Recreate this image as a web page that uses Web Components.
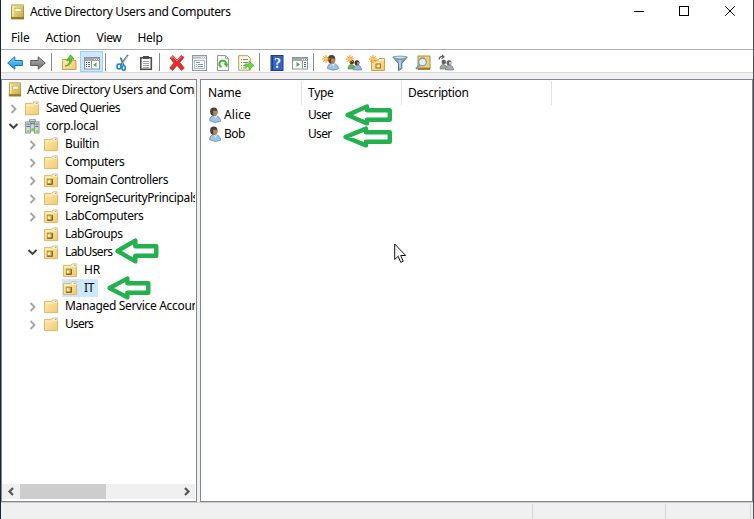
<!DOCTYPE html>
<html lang="en"><head><meta charset="utf-8"><title>Active Directory Users and Computers</title>
<style>html,body{margin:0;height:519px;overflow:hidden;background:#fff}</style></head>
<body><aduc-window></aduc-window>
<script>
const defs = `<svg width="0" height="0" style="position:absolute"><defs>
<linearGradient id="y" x1="0" y1="0" x2="1" y2="1"><stop stop-color="#ffeab0"/><stop offset="1" stop-color="#efca72"/></linearGradient>
<linearGradient id="k" x1="0" y1="0" x2="1" y2="1"><stop stop-color="#f3e6a4"/><stop offset="1" stop-color="#c9a73e"/></linearGradient>
<linearGradient id="b" x1="0" y1="0" x2="0" y2="1"><stop stop-color="#86d8ff"/><stop offset="1" stop-color="#168ee0"/></linearGradient>
<linearGradient id="g" x1="0" y1="0" x2="0" y2="1"><stop stop-color="#b5b5b5"/><stop offset="1" stop-color="#6c6c6c"/></linearGradient></defs></svg>`;
const folder = '<path d="M.5 2.500h7.500l1.500-1.500h5v13.500H.5z" fill="url(#y)" stroke="#d9b565"/><path d="M9.500 2.500h5" stroke="#fff" stroke-width="1.800"/><path d="M11.500 2.500h2" stroke="#3b91df"/><path d="M1.500 4.500h7.500l1-1h4" stroke="#fff2c8" fill="none"/>';
const head = (x,y) => `<g transform="translate(${x} ${y})"><path d="M2.500 13.500C2.500 10 4 8.500 7.500 8C11 8.500 13.500 11 13.300 14Q8 16.500 2.500 13.500z" fill="#9cc5ea" stroke="#6289b1" stroke-width=".8"/><path d="M6.500 8l2 3.500L10 8z" fill="#e9f4ff"/><ellipse cx="6.600" cy="4.300" rx="3.700" ry="4.200" fill="#49403b"/><path d="M5.800 3.500h4.400v3L8.500 9.200 6.200 8z" fill="#bd8156"/></g>`;
const spark = '<path d="M4 0v8M0 4h8M1.300 1.300l5.400 5.400M6.700 1.300L1.300 6.700" stroke="#f79b20" stroke-width="1.100"/><circle cx="4" cy="4" r="1.500" fill="#ffcf55"/>';
const panel = '<rect x=".5" y="2.500" width="15" height="11.500" fill="#fff" stroke="#8b929b"/><path d="M1 4.500h14" stroke="#a1a8b2" stroke-width="3"/><path d="M10 4.500h1m1 0h1m1 0h1" stroke="#fff"/>';
const arrowR = 'M.7 5.500h7.500V1.800L15.300 8l-7.100 6.200v-3.700H.7z';
const people = (a,b,c) => `<circle cx="5.800" cy="7" r="2.300" fill="${c}"/><path d="M2 14q0-5 4-4.500 3 .5 3 4.500z" fill="${a}" stroke="#5c785c" stroke-width=".6"/><circle cx="11" cy="7.700" r="2.500" fill="${c}"/><path d="M11 7h2v2l-1 1-1-1z" fill="#ba825b"/><path d="M7.500 15q0-5 4-4.700 4 .2 4 4.700z" fill="${b}" stroke="#5c6f85" stroke-width=".6"/>`;
const icons = {
 folder,
 ou: folder+'<rect x="3.500" y="6.500" width="5" height="5.500" fill="#d8bc5c" stroke="#a58a3a"/><rect x="4" y="8" width="2.500" height="2.500" fill="#fff4bd"/><path d="M3.500 12h5.500V6.500" stroke="#6f5c1c" fill="none"/>',
 book:'<rect x="2.500" y="1" width="12" height="14" fill="url(#k)" stroke="#ae9440"/><path d="M2 1.500h13" stroke="#d8c377"/><path d="M4 2v10.500" stroke="#fff6c4"/><rect x="6" y="4.500" width="6" height="3" fill="#fffde5" stroke="#c9b25d" stroke-width=".7"/><path d="M2 14h13" stroke="#957a28" stroke-width="2"/>',
 domain:'<g stroke="#76848b" stroke-width=".8" fill="#d0dadd"><rect x="5" y=".7" width="6" height="12"/><rect x=".7" y="3" width="5" height="12"/><rect x="10" y="3" width="5" height="12"/></g><path d="M6 3h4M6 5h4M1.500 5.500h3.500M1.500 8h3.500M11 5.500h3M11 8h3" stroke="#506269"/><path d="M2.500 13h2M7 11h2.500M12 13h2" stroke="#6dda18" stroke-width="2.200"/>',
 back:`<path transform="matrix(-1 0 0 1 16 0)" d="${arrowR}" fill="url(#b)" stroke="#2070a9"/>`,
 fwd:`<path d="${arrowR}" fill="url(#g)" stroke="#5b5b5b"/>`,
 up:'<path d="M1.500 4.500h4l1.500 1h8v9h-13.500z" fill="url(#y)" stroke="#c7a257"/><path d="M4 11c4-1 5-4 4.500-6.500L5.500 5.500 9.500 0l3.500 4-2.500.1C11 7 9 11 4 11z" fill="#57d628" stroke="#329417" stroke-width=".7"/>',
 tree:panel+'<path d="M7.500 6v7.500" stroke="#8b929b"/><path d="M2 7.500h1m1 0h2M2 9.500h1m1 0h2M2 11.500h1m1 0h2" stroke="#3d6d9b"/><path d="M12.500 7.200v5l-3-2.500z" fill="#39b62c"/>',
 cut:'<path d="M13 0L5.500 10M5.500 2.500L9 11" stroke="#567185" stroke-width="1.800"/><path d="M12.500 1L7 9" stroke="#bcd4e2" stroke-width=".8"/><ellipse cx="4" cy="11.500" rx="2" ry="2.500" fill="none" stroke="#1784d6" stroke-width="1.600"/><ellipse cx="8.600" cy="13" rx="1.700" ry="2.200" fill="none" stroke="#1784d6" stroke-width="1.600"/>',
 clip:'<rect x="2.800" y="2.800" width="10.500" height="11.500" fill="#fff" stroke="#4d4d4d" stroke-width="1.600"/><path d="M5 1h6v3H5z" fill="#4d4d4d"/><path d="M5 6.500h6M5 8.500h6M5 10.500h6M5 12.500h6" stroke="#8e8e8e" stroke-width=".8"/>',
 del:'<path d="M1 3l3-2.500 4 4.500 4-4.500L15 2.300 10.800 7.500 15.300 13l-2.800 2.500L8 10.500 3.500 15.500.7 13l4.300-5z" fill="#e52c2d" stroke="#ad171b" stroke-width=".6"/><path d="M2 3l2-1.500 4 4.500 4-4.500" fill="none" stroke="#ff8c84"/>',
 props:'<rect x=".5" y=".5" width="14" height="15" fill="#f3f6fa" stroke="#9199a2"/><path d="M1 2.500h13" stroke="#b5bcc5" stroke-width="2"/><path d="M9 2.500h1m1 0h1m1 0h1" stroke="#fff"/><rect x="2.500" y="5.500" width="10" height="8" fill="#fff" stroke="#9ca9b7" stroke-width=".8"/><path d="M4 7.500h4M4 9.500h1m1 0h5M4 11.500h1m1 0h5" stroke="#6d9bc4"/>',
 refresh:'<path d="M2.500.5h8l3 3v12h-11z" fill="#f8f8f5" stroke="#999"/><path d="M10.500.5v3h3" fill="none" stroke="#aaa"/><path d="M6.500 12A3.300 3.300 0 1 1 11 9" fill="none" stroke="#3bb735" stroke-width="1.900"/><path d="M8.500 8.500H13L12 12.500z" fill="#3bb735"/>',
 exp:'<path d="M.7.700h9l2.500 2.500v12H.7z" fill="#fffbea" stroke="#b69b67"/><path d="M3 4.500h1m1 0h5M3 7.500h1m1 0h5M3 10.500h1m1 0h5M3 13h1m1 0h4" stroke="#6d6b6b" stroke-width=".8"/><path d="M7 9h4V6l5 4.500-5 4v-2.700H7z" fill="#69dc41" stroke="#379b25" stroke-width=".6"/>',
 help:'<rect x="2" y=".5" width="12" height="15" fill="#3763cc" stroke="#203b91"/><path d="M3.500 1v14" stroke="#253f98"/><text x="5" y="12.500" fill="#fff" font-family="Liberation Serif,serif" font-weight="bold" font-size="14">?</text>',
 console:panel+'<path d="M10.500 6v7.500" stroke="#8b929b"/><path d="M12 7.500h2M12 9.500h2M12 11.500h2" stroke="#3d6d9b"/><path d="M4.500 7v5l3.500-2.500z" fill="#39b62c"/>',
 user:head(2,0)+'<g transform="translate(-1 0)">'+spark+'</g>',
 group:people('#64b94e','#8dbbe4','#4c362b')+spark,
 newou:'<path d="M2.500 5.500h6l1.500-2h5.500v12h-13z" fill="url(#y)" stroke="#cea14c"/><path d="M10 5h5" stroke="#fff"/><rect x="7" y="9" width="4.500" height="4" fill="#fae38e" stroke="#9b731c"/>'+spark,
 filter:'<path d="M.8 2h14.500L9.800 8.500v5L6.500 15.500v-7z" fill="#83a6bc" stroke="#55758b"/><ellipse cx="8" cy="2.500" rx="6.500" ry="1.400" fill="#cce1ed" stroke="#65859a" stroke-width=".7"/><path d="M8 5v8" stroke="#c5deed" stroke-width="1.400"/>',
 find:'<rect x="3" y="1" width="12" height="13" fill="#ead07a" stroke="#b78e31"/><path d="M3 13.700h12" stroke="#967329" stroke-width="2"/><circle cx="7.500" cy="7" r="3.800" fill="#e3f3fc" stroke="#7894a5" stroke-width="1.200"/><path d="M4.500 10L1 14" stroke="#7b9cb4" stroke-width="2"/>',
 addgroup:people('#a4a4a4','#aaa','#666').replace('#ba825b','#ccc')+'<path d="M1 4.500Q2 .5 5 1.500M4 0l2 2-2.500 1.500" fill="none" stroke="#555" stroke-width="1.100"/>',
 head:head(-.8,-.7)
};
const textFont = 'font:12px/18px "Noto Sans","Open Sans",sans-serif;color:#000;';
function define(name, css, html, ready){
 customElements.define(name, class extends HTMLElement{
  connectedCallback(){ if(this.shadowRoot) return;
   const s=this.attachShadow({mode:'open'}), t=document.createElement('template');
   t.innerHTML=`<style>${css}</style>${typeof html==='function'?html(this):html}`;
   s.append(t.content.cloneNode(true)); if(ready) ready(this,s);
  }});
}
define('ui-icon',':host{display:block;flex:none;width:16px;height:16px}svg{display:block;overflow:visible}',
 e=>defs+`<svg width="${e.getAttribute('size')||16}" height="${e.getAttribute('size')||16}" viewBox="0 0 16 16" fill="none">${icons[e.getAttribute('name')]}</svg>`);
define('ui-label',':host{display:block;flex:none;white-space:nowrap;'+textFont+'}span{display:inline-block}','<span><slot></slot></span>',(e,s)=>{
 const w=+e.getAttribute('w'), sp=s.querySelector('span'), n=e.textContent.length;
 if(w&&n>1) sp.style.letterSpacing=((w-sp.getBoundingClientRect().width)/n)+'px';
});
define('title-bar',':host{display:flex;height:25px;align-items:center;padding-left:8px}ui-icon{margin-top:-2px}ui-label{margin:-1px auto 0 5px}svg{display:block;flex:none}',
 `<ui-icon name="book"></ui-icon><ui-label w="200.5">Active Directory Users and Computers</ui-label>
 <svg width="119" height="25" fill="none" stroke="#000"><path d="M0 11.500h10"/><rect x="45.500" y="6.500" width="9" height="9"/><path d="M91.200 6.200l9.600 9.600m0-9.600l-9.600 9.600"/></svg>`);
define('menu-bar',':host{display:flex;height:24px;padding:4px 0 0 10px;box-sizing:border-box;gap:16px}',
 '<ui-label w="18.500">File</ui-label><ui-label w="35">Action</ui-label><ui-label w="25">View</ui-label><ui-label w="25">Help</ui-label>');
define('tool-button',':host{display:flex;width:23px;height:21px;box-sizing:border-box;padding-top:2px;align-items:center;justify-content:center}:host([on]){background:#cce8ff;box-shadow:inset 0 0 0 1px #99d1ff}',
 e=>`<ui-icon name="${e.getAttribute('icon')}"></ui-icon>`);
define('tool-sep',':host{display:block;width:8px;height:18px;box-sizing:border-box;padding-left:2px}i{display:block;width:1px;height:18px;background:#8a8a8a}','<i></i>');
define('tool-bar',':host{display:flex;height:24px;box-sizing:border-box;padding:1px 2px 0;border-top:1px solid #aeadb5;border-bottom:1px solid #d7d7d7;align-items:center;background:#fff}',
 ['back','fwd','|','up','tree','|','cut','clip','|','del','props','refresh','exp','|','help','console','|','user','group','newou','filter','find','addgroup'].map(n=>n==='|'?'<tool-sep></tool-sep>':`<tool-button icon="${n}" ${n==='tree'?'on':''}></tool-button>`).join(''));
define('tree-row',':host{display:flex;height:18px;align-items:center}.c{width:20px;height:16px;flex:none}.i{padding:0 6px 0 1px;height:18px;display:flex;align-items:center}.n{display:flex;align-items:center;height:18px;padding-right:4px}:host([sel]) .n{background:#cce8ff}ui-label{margin-top:-1px}.i ui-icon{width:15px;height:15px}',
 e=>{const d=+e.getAttribute('depth'),x=e.getAttribute('state');
 return `<svg class="c" style="margin-left:${d*19}px" fill="none" stroke="${x==='open'?'#404040':'#a6a6a6'}" stroke-width="1.900"><path d="${x==='open'?'M5.500 6l4 4 4-4':x==='closed'?'M7.500 5l4 4-4 4':''}"/></svg><div class="n"><div class="i"><ui-icon size="15" name="${e.getAttribute('icon')}"></ui-icon></div><ui-label w="${e.getAttribute('w')}">${e.textContent}</ui-label></div>`});
define('scroll-bar',':host{display:flex;height:15px;background:#f0f0f0;margin:0 1px 0 0}svg{flex:none}.thumb{width:86px;background:#cdcdcd}.space{flex:1}',
 '<svg width="18" height="15" fill="none" stroke="#555" stroke-width="2.200"><path d="M11 4L7.500 7.500 11 11"/></svg><div class="thumb"></div><div class="space"></div><svg width="17" height="15" fill="none" stroke="#555" stroke-width="2.200"><path d="M7 4l3.500 3.500L7 11"/></svg>');
const rows=[['Saved Queries',0,'closed','folder',74],['corp.local',0,'open','domain',52],['Builtin',1,'closed','folder',34],['Computers',1,'closed','folder',59.5],['Domain Controllers',1,'closed','ou',103],['ForeignSecurityPrincipals',1,'closed','folder',133],['LabComputers',1,'closed','ou',78.500],['LabGroups',1,'','ou',57.5],['LabUsers',1,'open','ou',47.5],['HR',2,'','ou',16],['IT',2,'','ou',10],['Managed Service Accounts',1,'closed','folder',143],['Users',1,'closed','folder',28]];
define('tree-panel',':host{display:flex;flex-direction:column;width:196px;height:423px;box-sizing:border-box;border:1px solid #828790;background:#fff;padding:1px 0}.v{flex:1;overflow:hidden;margin:0 1px 0 2px}.r{display:flex;height:18px;padding-left:3px;align-items:center;gap:4px}.r ui-label{margin-top:-1px}scroll-bar{margin-bottom:1px}',
 '<div class="v"><div class="r"><ui-icon size="15" name="book"></ui-icon><ui-label w="201.500">Active Directory Users and Computers</ui-label></div>'+rows.map(r=>`<tree-row depth="${r[1]}" state="${r[2]}" icon="${r[3]}" w="${r[4]}" ${r[0]==='IT'?'sel':''}>${r[0]}</tree-row>`).join('')+'</div><scroll-bar></scroll-bar>');
define('list-panel',':host{display:block;flex:1;height:423px;box-sizing:border-box;border:1px solid #828790;background:#fff}.h{display:flex;height:24px;margin:1px 0 1px}.h div{box-sizing:border-box;padding:3px 0 0 6px;border-right:1px solid #e2e2e2;width:100px}.h div:first-child{width:101px;padding-left:7px}.h div:last-child{width:150px}.r{display:flex;height:19px;align-items:center;padding-left:7px}.a{width:100px;display:flex;align-items:center}ui-label{margin-top:-1px}.h ui-label{margin:0}',
 '<div class="h"><div><ui-label w="33">Name</ui-label></div><div><ui-label w="25.500">Type</ui-label></div><div><ui-label w="60.500">Description</ui-label></div></div>'+[['Alice',27],['Bob',21]].map(r=>`<div class="r"><div class="a"><ui-icon name="head"></ui-icon><ui-label w="${r[1]}">${r[0]}</ui-label></div><ui-label w="23.500">User</ui-label></div>`).join(''));
define('status-bar',':host{display:flex;flex:1;border-top:1px solid #cbcbd0;padding-top:1px;background:#f0f0f0}div{box-sizing:border-box;border-right:1px solid #d5d5d5}.a{width:532px}.b{width:133px}.c{width:85px}','<div class="a"></div><div class="b"></div><div class="c"></div>');
define('green-arrow',':host{display:block;position:absolute}svg{display:block;overflow:visible}',
 e=>{const w=+e.getAttribute('w'),h=+e.getAttribute('h'),m=h/2,n=w*.48;return `<svg width="${w}" height="${h}"><path d="M3.500 ${m}L${n} 2.600V${m-4.800}H${w-2.200}V${m+4.800}H${n}V${h-2.600}z" fill="#fff" stroke="#22b14c" stroke-width="4.400" stroke-linejoin="round"/></svg>`});
define('mouse-pointer',':host{display:block;position:absolute;left:393px;top:243px}','<svg width="14" height="21" style="display:block"><path d="M.700 1v15.500l3.500-3.200 2.500 6 2.500-1-2.500-5.800h5z" fill="#fff" stroke="#111"/></svg>');
define('aduc-window',':host{display:flex;flex-direction:column;position:relative;width:754px;height:519px;box-sizing:border-box;border-left:1px solid #1c2433;border-right:1px solid #4a4d55;background:#fff;overflow:hidden}.p{display:flex;gap:3px;height:423px;padding-top:6px;background:#f0f0f0}',
 '<title-bar></title-bar><menu-bar></menu-bar><tool-bar></tool-bar><div class="p"><tree-panel></tree-panel><list-panel></list-panel></div><status-bar></status-bar>'+[[343.500,103.500,48,22],[341.500,125.500,50,22],[113.500,238,44.500,26],[106,275.500,44.500,24]].map(a=>`<green-arrow w="${a[2]}" h="${a[3]}" style="left:${a[0]-1}px;top:${a[1]}px"></green-arrow>`).join('')+'<mouse-pointer></mouse-pointer>');
</script></body></html>
